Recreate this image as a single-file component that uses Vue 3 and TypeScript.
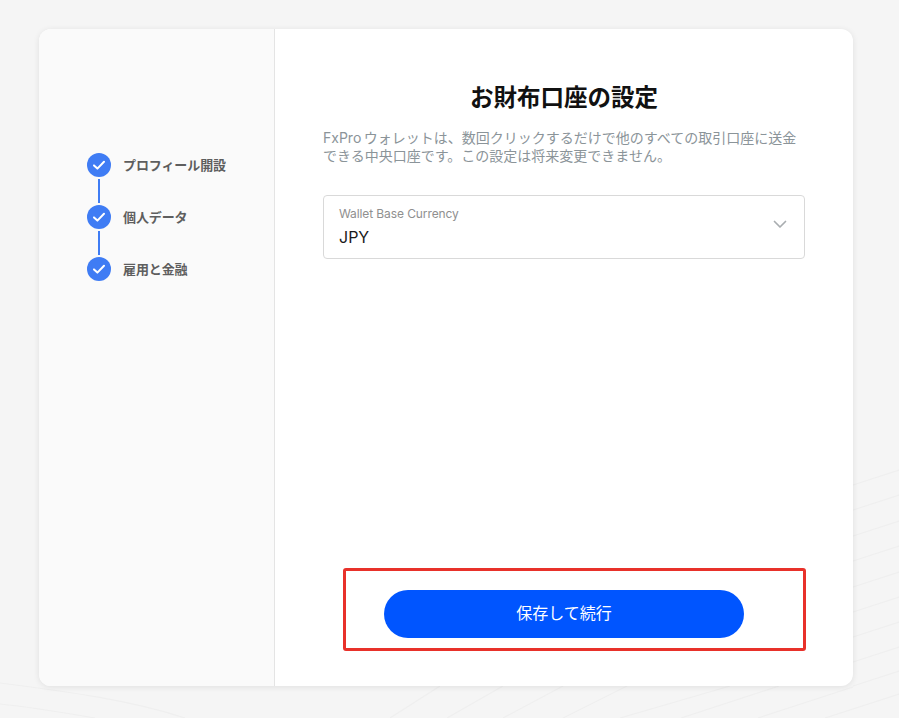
<script setup lang="ts">
const steps: string[] = ['プロフィール開設', '個人データ', '雇用と金融']
const rightEdges: number[] = [485, 510, 536, 561, 587, 612, 637, 662, 686]
const lines: string[] = [
  ...rightEdges.map((y) => `M853 ${y} L899 ${y - 15}`),
  'M390 718 L440 686', 'M447 718 L503 686', 'M503 718 L563 686', 'M563 718 L627 686',
  'M620 718 L730 686', 'M681 718 L779 686', 'M758 718 L853 687', 'M825 718 L899 694',
  'M0 683 C70 692 130 700 185 718', 'M0 704 C30 707 60 712 95 718'
]
</script>

<template>
  <div class="page">
    <svg class="bg" width="899" height="718" viewBox="0 0 899 718" aria-hidden="true">
      <path v-for="d in lines" :key="d" :d="d" />
    </svg>
    <div class="card">
      <aside class="side">
        <ol class="steps">
          <li v-for="(s, i) in steps" :key="s" class="step">
            <div class="marker">
              <span class="dot">
                <svg width="14" height="14" viewBox="0 0 14 14" fill="none">
                  <path d="M2 7.4 L5.4 10.6 L12 3.8" stroke="#fff" stroke-width="2" stroke-linecap="round" stroke-linejoin="round" />
                </svg>
              </span>
              <span v-if="i < steps.length - 1" class="link"></span>
            </div>
            <span class="label">{{ s }}</span>
          </li>
        </ol>
      </aside>
      <main class="main">
        <h1 class="title">お財布口座の設定</h1>
        <p class="desc">FxPro ウォレットは、数回クリックするだけで他のすべての取引口座に送金できる中央口座です。この設定は将来変更できません。</p>
        <div class="select">
          <div class="select-text">
            <span class="select-label">Wallet Base Currency</span>
            <span class="select-value">JPY</span>
          </div>
          <svg class="chev" width="14" height="9" viewBox="0 0 14 9" fill="none">
            <path d="M1.5 1.5 L7 7 L12.5 1.5" stroke="#a9adb0" stroke-width="1.7" stroke-linecap="round" stroke-linejoin="round" />
          </svg>
        </div>
        <div class="footer">
          <button class="cta" type="button">保存して続行</button>
          <span class="highlight"></span>
        </div>
      </main>
    </div>
  </div>
</template>

<style>
html, body { margin: 0; background: #f5f5f5; }
</style>

<style scoped>
.page {
  position: relative;
  box-sizing: border-box;
  width: 899px;
  height: 718px;
  overflow: hidden;
  padding: 29px 46px 32px 39px;
  background: #f5f5f5;
  font-family: Inter, "Noto Sans CJK JP", sans-serif;
}
.bg { position: absolute; inset: 0; }
.bg path { fill: none; stroke: #efefef; stroke-width: 1.2; }
.card {
  position: relative;
  display: flex;
  height: 657px;
  background: #fff;
  border-radius: 12px;
  overflow: hidden;
  box-shadow: 0 1px 6px rgba(0, 0, 0, 0.09);
}
.side {
  box-sizing: border-box;
  width: 236px;
  flex: none;
  padding: 124px 0 0 48px;
  background: #fafafa;
  border-right: 1px solid #e4e4e4;
}
.steps { list-style: none; margin: 0; padding: 0; }
.step { display: flex; gap: 12px; }
.marker { display: flex; flex-direction: column; align-items: center; width: 24px; }
.dot {
  display: flex;
  align-items: center;
  justify-content: center;
  width: 24px;
  height: 24px;
  border-radius: 50%;
  background: #3f7cf4;
}
.link { width: 2px; height: 24px; margin: 2px 0; background: #3f7cf4; }
.label {
  font-size: 13px;
  font-weight: 700;
  line-height: 24px;
  letter-spacing: -0.1px;
  color: #5e5e5e;
}
.main {
  display: flex;
  flex: 1;
  flex-direction: column;
  box-sizing: border-box;
  padding: 52px 48px 48px;
  min-width: 0;
}
.title {
  margin: 0;
  font-size: 23.5px;
  font-weight: 700;
  line-height: 34px;
  text-align: center;
  color: #111;
}
.desc {
  margin: 14px 0 0;
  font-size: 14px;
  line-height: 18px;
  word-spacing: -1.5px;
  color: #8b9499;
}
.select {
  display: flex;
  align-items: center;
  justify-content: space-between;
  box-sizing: border-box;
  height: 64px;
  margin-top: 30px;
  padding: 0 17px 0 15px;
  border: 1px solid #d9d9d9;
  border-radius: 4px;
}
.select-text { display: flex; flex-direction: column; }
.select-label { font-size: 12px; line-height: 16px; letter-spacing: -0.1px; color: #8f8f8f; }
.select-value { margin-top: 3px; font-size: 16px; line-height: 24px; color: #1a1a1a; }
.chev { margin-top: -5px; }
.footer {
  position: relative;
  display: flex;
  justify-content: center;
  margin-top: auto;
}
.cta {
  width: 360px;
  height: 48px;
  padding: 0 0 4px;
  border: 0;
  border-radius: 24px;
  background: #0055ff;
  color: #fff;
  font: 400 16px Inter, "Noto Sans CJK JP", sans-serif;
}
.highlight {
  position: absolute;
  left: 20px;
  right: -1px;
  top: -22px;
  bottom: -13px;
  border: 3px solid #e8312a;
  border-radius: 3px;
  box-sizing: border-box;
  pointer-events: none;
}
</style>
